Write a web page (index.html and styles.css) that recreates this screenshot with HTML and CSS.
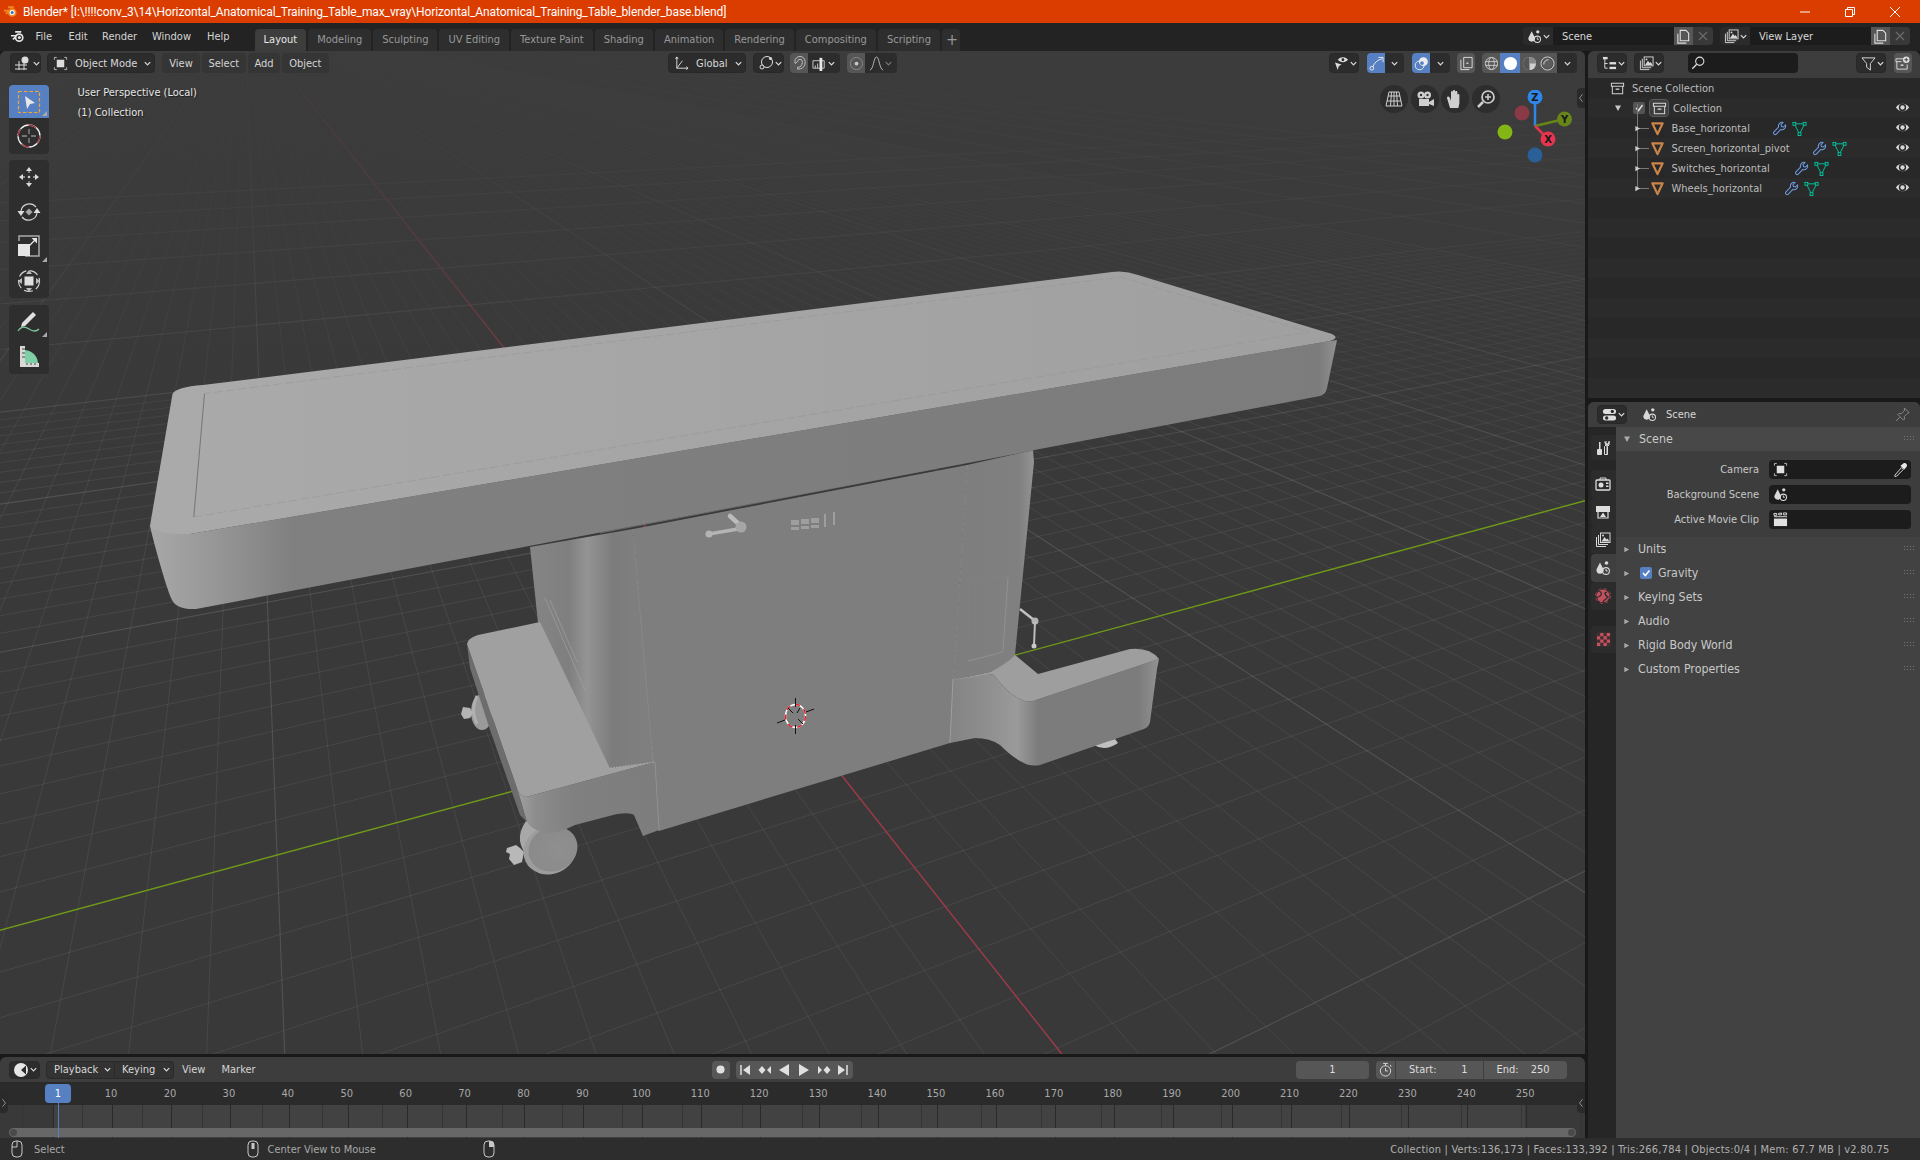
FILE: index.html
```html
<!DOCTYPE html>
<html lang="en">
<head>
<meta charset="utf-8">
<title>Blender</title>
<link rel="stylesheet" href="styles.css">
</head>
<body>
<svg class="defs" width="0" height="0" aria-hidden="true">
  <symbol id="chev" viewBox="0 0 10 10"><polyline points="2,3.5 5,6.5 8,3.5" fill="none" stroke="currentColor" stroke-width="1.4"/></symbol>
  <symbol id="scene" viewBox="0 0 16 16"><path d="M5 2.5 8.2 8.8A3.5 3.5 0 1 1 1.8 8.8Z" fill="currentColor"/><circle cx="11.5" cy="3" r="1.8" fill="currentColor"/><circle cx="11" cy="11" r="3.4" fill="none" stroke="currentColor" stroke-width="1.1"/><path d="M11 9v2h1.6" fill="none" stroke="currentColor"/></symbol>
  <symbol id="layers" viewBox="0 0 16 16"><path d="M1.5 5v9.5H11M3.5 3v9.5H13" fill="none" stroke="currentColor"/><rect x="5.5" y="1" width="9.5" height="9.5" fill="none" stroke="currentColor"/><path d="M6.5 9.5 9.5 5l2 2.5 1-1 2 3Z" fill="currentColor"/><circle cx="8" cy="3.6" r="1" fill="currentColor"/></symbol>
  <symbol id="coll" viewBox="0 0 16 16"><path d="M1.5 2.5h13v3h-13zM2.5 5.5v8h11v-8" fill="none" stroke="currentColor" stroke-width="1.1"/><rect x="6" y="8" width="4" height="1.4" fill="currentColor"/></symbol>
  <symbol id="eye" viewBox="0 0 16 16"><path d="M1 8C4 2.8 12 2.8 15 8 12 13.2 4 13.2 1 8Z" fill="currentColor"/><circle cx="8" cy="8" r="3.9" fill="#2a2a2a"/><circle cx="8" cy="8" r="2.3" fill="currentColor"/></symbol>
  <symbol id="wrench" viewBox="0 0 16 16"><path d="M14.4 4.2A3.9 3.9 0 0 1 9.4 9L4.6 14a1.7 1.7 0 0 1-2.5-2.4L7 6.6A3.9 3.9 0 0 1 11.7 1.6L9.6 3.8l.5 2.1 2.1.5Z" fill="none" stroke="#6d9be2" stroke-width="1.1"/></symbol>
  <symbol id="mesh" viewBox="0 0 16 16"><path d="M2.5 3h11L8 14Z" fill="none" stroke="#00c8a0" stroke-width="1"/><g fill="#262626" stroke="#00c8a0"><rect x="1" y="1.5" width="3" height="3"/><rect x="12" y="1.5" width="3" height="3"/><rect x="6.5" y="12.5" width="3" height="3"/></g></symbol>
  <symbol id="obj" viewBox="0 0 16 16"><path d="M2.5 2.5h11L8 14Z" fill="none" stroke="#c9844a" stroke-width="2.4" stroke-linejoin="round"/></symbol>
  <symbol id="mouse" viewBox="0 0 12 18"><rect x="1" y="1" width="10" height="16" rx="4" fill="none" stroke="#c8c8c8"/><path d="M6 1v6H1" fill="none" stroke="#c8c8c8"/></symbol>
  <symbol id="corner" viewBox="0 0 6 6"><path d="M6 0v6H0Z" fill="currentColor"/></symbol>
  <symbol id="tri-r" viewBox="0 0 8 8"><path d="M1.5 1 7 4 1.5 7Z" fill="currentColor"/></symbol>
  <symbol id="tri-d" viewBox="0 0 8 8"><path d="M1 1.5h6L4 7Z" fill="currentColor"/></symbol>
  <symbol id="grip" viewBox="0 0 12 8"><g fill="currentColor"><rect x="0" y="1" width="1" height="1"/><rect x="3" y="1" width="1" height="1"/><rect x="6" y="1" width="1" height="1"/><rect x="9" y="1" width="1" height="1"/><rect x="0" y="4" width="1" height="1"/><rect x="3" y="4" width="1" height="1"/><rect x="6" y="4" width="1" height="1"/><rect x="9" y="4" width="1" height="1"/></g></symbol>
</svg>

<header class="titlebar">
  <svg class="title-logo" viewBox="0 0 16 16" width="15" height="15"><path d="M1 7h5M3 10.5l4-3M5.5 3.5h6" stroke="#f08a24" stroke-width="2" fill="none"/><circle cx="9.8" cy="9" r="4.6" fill="#f08a24"/><circle cx="9.8" cy="9" r="2.7" fill="#fff"/><circle cx="9.8" cy="9" r="1.6" fill="#2a6fc0"/></svg>
  <span class="title-text">Blender* [I:\!!!!conv_3\14\Horizontal_Anatomical_Training_Table_max_vray\Horizontal_Anatomical_Training_Table_blender_base.blend]</span>
  <div class="winbtns">
    <svg viewBox="0 0 12 12" width="12" height="12"><path d="M1 6h10" stroke="#fff"/></svg>
    <svg viewBox="0 0 12 12" width="12" height="12"><path d="M1.5 3.5h7v7h-7zM3.5 3.5v-2h7v7h-2" fill="none" stroke="#fff"/></svg>
    <svg viewBox="0 0 12 12" width="12" height="12"><path d="M1 1l10 10M11 1 1 11" stroke="#fff"/></svg>
  </div>
</header>

<nav class="topbar">
  <svg class="blogo" viewBox="0 0 16 16" width="15" height="15"><path d="M1 7.2h5.5M3 11l4.500-3.500M5.500 3h6.500" stroke="#e6e6e6" stroke-width="1.800" fill="none"/><circle cx="9.800" cy="9.200" r="4.700" fill="#e6e6e6"/><circle cx="9.800" cy="9.200" r="2.900" fill="#232323"/><circle cx="10" cy="9" r="1.600" fill="#e6e6e6"/></svg>
  <ul class="menu">
    <li>File</li><li>Edit</li><li>Render</li><li>Window</li><li>Help</li>
  </ul>
  <ul class="tabs">
    <li class="tab active">Layout</li>
    <li class="tab">Modeling</li>
    <li class="tab">Sculpting</li>
    <li class="tab">UV Editing</li>
    <li class="tab">Texture Paint</li>
    <li class="tab">Shading</li>
    <li class="tab">Animation</li>
    <li class="tab">Rendering</li>
    <li class="tab">Compositing</li>
    <li class="tab">Scripting</li>
    <li class="tab plus">+</li>
  </ul>
  <div class="ids">
    <div class="idblock">
      <span class="idicon"><svg width="15" height="15"><use href="#scene"/></svg><svg width="9" height="9"><use href="#chev"/></svg></span>
      <span class="idfield idfield-scene">Scene</span>
      <span class="idbtn"><svg viewBox="0 0 16 16" width="15" height="15"><path d="M2 5v10h9M4.500 1.500h6l3 3v8h-9z" fill="none" stroke="#ddd" stroke-width="1.200"/></svg></span>
      <span class="idx"><svg viewBox="0 0 10 10" width="10" height="10"><path d="M1 1l8 8M9 1 1 9" stroke="#6a6a6a" stroke-width="1.200"/></svg></span>
    </div>
    <div class="idblock">
      <span class="idicon"><svg width="15" height="15"><use href="#layers"/></svg><svg width="9" height="9"><use href="#chev"/></svg></span>
      <span class="idfield idfield-layer">View Layer</span>
      <span class="idbtn"><svg viewBox="0 0 16 16" width="15" height="15"><path d="M2 5v10h9M4.500 1.500h6l3 3v8h-9z" fill="none" stroke="#ddd" stroke-width="1.200"/></svg></span>
      <span class="idx"><svg viewBox="0 0 10 10" width="10" height="10"><path d="M1 1l8 8M9 1 1 9" stroke="#6a6a6a" stroke-width="1.200"/></svg></span>
    </div>
  </div>
</nav>

<main class="workspace">
  <div class="col-left">
    <section class="viewport">
      <svg class="scene3d" viewBox="0 51 1585 1003" width="1585" height="1003">
        <defs>
          <linearGradient id="gFade" x1="0" y1="51" x2="0" y2="500" gradientUnits="userSpaceOnUse"><stop offset="0" stop-color="#3c3c3c" stop-opacity=".97"/><stop offset=".45" stop-color="#3b3b3b" stop-opacity=".72"/><stop offset="1" stop-color="#393939" stop-opacity="0"/></linearGradient>
          <linearGradient id="gTop" x1="150" y1="0" x2="1337" y2="0" gradientUnits="userSpaceOnUse"><stop offset="0" stop-color="#aaaaaa"/><stop offset="1" stop-color="#a0a0a0"/></linearGradient>
          <linearGradient id="gSide" x1="150" y1="0" x2="1337" y2="0" gradientUnits="userSpaceOnUse"><stop offset="0" stop-color="#a8a8a8"/><stop offset=".05" stop-color="#989898"/><stop offset=".12" stop-color="#808080"/><stop offset=".985" stop-color="#7c7c7c"/><stop offset="1" stop-color="#919191"/></linearGradient>
          <linearGradient id="gColL" x1="530" y1="0" x2="640" y2="0" gradientUnits="userSpaceOnUse"><stop offset="0" stop-color="#858585"/><stop offset=".35" stop-color="#7f7f7f"/><stop offset=".52" stop-color="#949494"/><stop offset=".75" stop-color="#7c7c7c"/><stop offset="1" stop-color="#7f7f7f"/></linearGradient>
          <linearGradient id="gColR" x1="960" y1="0" x2="1034" y2="0" gradientUnits="userSpaceOnUse"><stop offset="0" stop-color="#7e7e7e"/><stop offset=".8" stop-color="#808080"/><stop offset="1" stop-color="#939393"/></linearGradient>
          <linearGradient id="gWing" x1="950" y1="0" x2="1160" y2="0" gradientUnits="userSpaceOnUse"><stop offset="0" stop-color="#838383"/><stop offset=".18" stop-color="#8f8f8f"/><stop offset=".32" stop-color="#9a9a9a"/><stop offset=".42" stop-color="#7c7c7c"/><stop offset=".9" stop-color="#7c7c7c"/><stop offset="1" stop-color="#949494"/></linearGradient>
          <linearGradient id="gFoot" x1="515" y1="0" x2="660" y2="0" gradientUnits="userSpaceOnUse"><stop offset="0" stop-color="#a2a2a2"/><stop offset=".15" stop-color="#8c8c8c"/><stop offset=".4" stop-color="#808080"/><stop offset="1" stop-color="#7d7d7d"/></linearGradient>
          <radialGradient id="gWheel" cx=".6" cy=".6" r=".7"><stop offset="0" stop-color="#8f8f8f"/><stop offset=".92" stop-color="#8a8a8a"/><stop offset="1" stop-color="#a4a4a4"/></radialGradient>
        </defs>
        <g id="grid"></g>
        <rect x="0" y="51" width="1585" height="450" fill="url(#gFade)"/>

        <!-- back wheels -->
        <g class="w-back">
          <ellipse cx="482" cy="712" rx="11" ry="18" fill="#9a9a9a"/>
          <path d="M477 696q-7 14 0 28" fill="none" stroke="#b0b0b0" stroke-width="3"/>
          <path d="M463 707l7 1 3 5-3 5-6 1-3-5Z" fill="#b4b4b4"/>
        </g>
        <path d="M1094 745q11 7 24-2l-3-4q-10 4-21 1Z" fill="#c0c0c0"/>

        <!-- column and panels -->
        <path d="M530 547 633 529 655 762 610 768 538 623Z" fill="url(#gColL)"/>
        <path d="M633 529 967 465 950 743 659 831Z" fill="#7e7e7e"/>
        <path d="M967 465 1033 450 1034 462 1015 655Q1008 664 990 672L953 680 950 743Z" fill="url(#gColR)"/>
        <path d="M633 529 659 831M967 465 950 743" stroke="#8e8e8e" stroke-width=".7" stroke-dasharray="6 1" fill="none"/>
        <path d="M1008 577 1003 652 968 661" stroke="#949494" stroke-width=".8" fill="none"/>
        <path d="M969 578 1008 577M969 578 968 661" stroke="#868686" stroke-width=".6" stroke-dasharray="2 2" fill="none"/>
        <path d="M545 598 585 690M550 600 577 662" stroke="#a0a0a0" stroke-width=".7" fill="none"/>
        <path d="M600 533 1033 450" stroke="#646464" stroke-width="1.200"/>

        <!-- front wheel -->
        <g class="w-front">
          <path d="M526 821q-14 20 4 38l16 8 20-40Z" fill="#a8a8a8"/>
          <ellipse cx="550" cy="850" rx="27" ry="24" fill="#9d9d9d" transform="rotate(-25 550 850)"/>
          <ellipse cx="553" cy="849" rx="25" ry="22" fill="url(#gWheel)" transform="rotate(-25 553 849)"/>
          <path d="M507 848l9-3 4 3 4 4-2 10-8 3-5-6 1-5-4-2Z" fill="#b8b8b8"/>
        </g>

        <!-- left foot -->
        <path d="M467 644 517 788 527 822 520 815 490 730 470 668Z" fill="#6d6d6d"/>
        <path d="M517 788Q519 796 526 797L655 762 659 830 643 836 634 815Q630 812 617 814L575 825Q555 835 545 833 532 830 527 822Z" fill="url(#gFoot)"/>
        <path d="M467 644Q468 638 478 635L540 622 610 768 655 762 526 797Q519 796 517 788Z" fill="#a0a0a0"/>
        <path d="M610 768 655 762" stroke="#b0b0b0" stroke-width=".8" stroke-dasharray="2 1"/>
        <path d="M655 762 659 830" stroke="#959595" stroke-width=".8"/>

        <!-- right wing -->
        <path d="M950 743 953 679 993 674Q1005 690 1013 695 1025 703 1033 701L1159 659 1157 669 1150 722Q1149 727 1144 729L1040 765Q1030 767 1022 762 1012 757 1000 745 990 738 975 738Z" fill="url(#gWing)"/>
        <path d="M953 680 990 672Q1005 665 1015 655L1038 674 1130 649Q1150 647 1159 659L1033 701Q1025 703 1013 695 1005 690 993 674L953 680Z" fill="#9e9e9e"/>
        <path d="M953 679 950 743" stroke="#a5a5a5" stroke-width=".8"/>

        <!-- levers and switches -->
        <path d="M709 534 738 529" stroke="#b4b4b4" stroke-width="3.500"/>
        <path d="M730 516 741 526" stroke="#bcbcbc" stroke-width="4.500" stroke-linecap="round"/>
        <circle cx="741" cy="527" r="5.500" fill="#a6a6a6"/><circle cx="709" cy="534" r="3.500" fill="#b4b4b4"/>
        <g fill="#9e9e9e" class="switches">
          <rect x="791" y="520" width="8" height="5"/><rect x="801" y="519" width="8" height="5"/><rect x="811" y="518" width="8" height="5"/>
          <rect x="791" y="527" width="8" height="3"/><rect x="801" y="526" width="8" height="3"/><rect x="811" y="525" width="8" height="3"/>
          <rect x="824" y="514" width="2" height="13"/><rect x="833" y="512" width="2" height="13"/>
        </g>
        <path d="M1020 609 1034 620" stroke="#c0c0c0" stroke-width="2.500"/>
        <circle cx="1035" cy="621" r="3.500" fill="#b4b4b4"/>
        <path d="M1035 622 1034 645" stroke="#bcbcbc" stroke-width="2"/>
        <circle cx="1034" cy="646" r="2.500" fill="#c8c8c8"/>

        <!-- table -->
        <path d="M150 526C152 535 165 585 172 600Q177 610 196 609L1320 396Q1326 394 1327 388L1337 340 1330 341 190 534Z" fill="url(#gSide)"/>
        <path d="M172.500 394Q176 387 203 385L1112 272Q1125 270 1138 275L1332 334Q1340 338 1330 341L190 534Q158 535 150 526Z" fill="url(#gTop)"/>
        <path d="M204.500 393.600 193.800 517" stroke="#6f6f6f" stroke-width=".9" fill="none"/>
        <path d="M193.800 517 1309 332 1120 277 204.500 393.600" stroke="#969696" stroke-width=".6" stroke-dasharray="9 3" fill="none"/>

        <!-- 3d cursor -->
        <ellipse cx="795.500" cy="716" rx="10" ry="11.500" fill="none" stroke="#fff" stroke-width="1.500"/>
        <ellipse cx="795.500" cy="716" rx="10" ry="11.500" fill="none" stroke="#e0202c" stroke-width="1.500" stroke-dasharray="5 5"/>
        <path d="M795.500 698v9M795.500 725v9M777 723l8-3M806 712l8-3M788 708l5 5M798 719l5 5M800 708l-3 5" stroke="#101010" stroke-width="1"/>
      </svg>

      <div class="vp-head">
        <span class="hbtn h-edit"><svg viewBox="0 0 18 16" width="18" height="16"><path d="M1 10h12M5 6v9M10 6v9M1 14h12" stroke="#dcdcdc" fill="none"/><circle cx="11" cy="5" r="3.500" fill="#dcdcdc"/></svg><svg width="9" height="9"><use href="#chev"/></svg></span>
        <span class="hbtn h-mode"><svg viewBox="0 0 16 16" width="15" height="15"><rect x="4" y="4" width="8" height="8" fill="#dcdcdc"/><path d="M1.500 4V1.500H4M12 1.500h2.500V4M14.500 12v2.500H12M4 14.500H1.500V12" fill="none" stroke="#bbb"/></svg><span class="lbl">Object Mode</span><svg class="chv" width="9" height="9"><use href="#chev"/></svg></span>
        <span class="hmenu m-view">View</span>
        <span class="hmenu m-select">Select</span>
        <span class="hmenu m-add">Add</span>
        <span class="hmenu m-object">Object</span>
        <span class="hbtn h-orient"><svg viewBox="0 0 16 16" width="15" height="15"><path d="M3 1v12h12M3 13 9 5" fill="none" stroke="#ddd"/><path d="M1.500 3 3 1l1.500 2M13 11.500l2 1.500-2 1.500" fill="none" stroke="#ddd"/></svg><span class="lbl">Global</span><svg class="chv" width="9" height="9"><use href="#chev"/></svg></span>
        <span class="hbtn h-pivot"><svg viewBox="0 0 16 16" width="16" height="16"><circle cx="9" cy="7" r="5.500" fill="none" stroke="#ddd"/><circle cx="4" cy="12" r="2" fill="#2b2b2b" stroke="#ddd"/><circle cx="12.500" cy="3.500" r="1.500" fill="#ddd"/></svg><svg width="9" height="9"><use href="#chev"/></svg></span>
        <span class="hjoin h-snap">
          <i class="seg on seg-snap"><svg viewBox="0 0 16 16" width="15" height="15"><path d="M3 6A5.500 5.500 0 0 1 14 6v1C14 12 10 14 6 14V12C9 12 11 10 11 7V6A2.500 2.500 0 0 0 6 6L3.500 8Z" fill="none" stroke="#c8c8c8"/></svg></i>
          <i class="seg seg-snapt"><svg viewBox="0 0 16 16" width="15" height="15"><path d="M1 5h12v8H1z" fill="none" stroke="#ccc"/><path d="M3.500 10v3M6 8v5M3.500 11" stroke="#ccc"/><rect x="8" y="2" width="3" height="14" fill="#e8e8e8"/></svg><svg width="9" height="9"><use href="#chev"/></svg></i>
        </span>
        <span class="hjoin h-prop">
          <i class="seg on seg-prop"><svg viewBox="0 0 16 16" width="15" height="15"><circle cx="8" cy="8" r="6.500" fill="none" stroke="#8a8a8a"/><circle cx="8" cy="8" r="2" fill="#c8c8c8"/></svg></i>
          <i class="seg seg-propt"><svg viewBox="0 0 16 16" width="15" height="15"><path d="M1 15C5 14 5 1 8 1s3 13 7 14" fill="none" stroke="#bbb"/></svg><svg class="dim" width="9" height="9"><use href="#chev"/></svg></i>
        </span>
        <span class="hbtn h-vis"><svg viewBox="0 0 16 16" width="15" height="15"><path d="M4 4C7 .5 12 .5 15 4 12 7.500 7 7.500 4 4Z" fill="#ddd"/><circle cx="9.500" cy="4" r="1.500" fill="#2b2b2b"/><path d="M1 7l7 2-3 2-1 4Z" fill="#ddd"/></svg><svg width="9" height="9"><use href="#chev"/></svg></span>
        <span class="hjoin h-giz">
          <i class="seg blue seg-18"><svg viewBox="0 0 16 16" width="15" height="15"><circle cx="3" cy="13" r="2" fill="none" stroke="#eee"/><path d="M4 11.500C6 7 9 4 14 3" fill="none" stroke="#eee"/><path d="M10 1.500h5v5" fill="none" stroke="#eee"/></svg></i>
          <i class="seg seg-19"><svg width="9" height="9"><use href="#chev"/></svg></i>
        </span>
        <span class="hjoin h-ovl">
          <i class="seg blue seg-18"><svg viewBox="0 0 16 16" width="15" height="15"><circle cx="6" cy="10" r="4.700" fill="none" stroke="#eee"/><circle cx="10" cy="6" r="4.700" fill="#eee"/><circle cx="8.500" cy="7.500" r="2" fill="#5680c2"/></svg></i>
          <i class="seg seg-20"><svg width="9" height="9"><use href="#chev"/></svg></i>
        </span>
        <span class="hjoin h-xray"><i class="seg on seg-18"><svg viewBox="0 0 16 16" width="15" height="15"><path d="M5 1.500h9v11H5zM2 4v10.500h9" fill="none" stroke="#ddd"/><rect x="8" y="7" width="2" height="1.500" fill="#ddd"/></svg></i></span>
        <span class="hjoin h-shade">
          <i class="seg on seg-18"><svg viewBox="0 0 16 16" width="15" height="15"><circle cx="8" cy="8" r="6.500" fill="none" stroke="#ccc"/><ellipse cx="8" cy="8" rx="3" ry="6.500" fill="none" stroke="#ccc"/><path d="M1.500 6h13M1.500 10h13" stroke="#ccc"/></svg></i>
          <i class="seg blue seg-20"><svg viewBox="0 0 16 16" width="15" height="15"><circle cx="8" cy="8" r="7" fill="#fff"/></svg></i>
          <i class="seg on seg-18"><svg viewBox="0 0 16 16" width="15" height="15"><circle cx="8" cy="8" r="7" fill="#d0d0d0"/><path d="M8 1a7 7 0 0 0 0 14Z" fill="#555"/><path d="M8 1a7 7 0 0 1 7 7H8Z" fill="#888"/></svg></i>
          <i class="seg on seg-19"><svg viewBox="0 0 16 16" width="15" height="15"><circle cx="8" cy="8" r="7" fill="none" stroke="#d0d0d0"/><circle cx="8" cy="8" r="5" fill="#5d5d5d"/><path d="M4 9a5 5 0 0 1 5-5" stroke="#ddd" fill="none"/></svg></i>
          <i class="seg seg-20"><svg width="9" height="9"><use href="#chev"/></svg></i>
        </span>
      </div>

      <div class="vp-body">
        <div class="toolbar">
          <div class="toolgroup">
            <div class="tool active">
              <svg viewBox="0 0 24 24" width="24" height="24"><rect x="1.500" y="1.500" width="21" height="21" fill="none" stroke="#f2a43a" stroke-width="1.200" stroke-dasharray="3.500 2"/><path d="M8 6 18 13 13 14 10 19Z" fill="#e8e8e8"/></svg>
              <svg class="cnr" width="5" height="5"><use href="#corner"/></svg>
            </div>
            <div class="tool tool-cursor">
              <svg viewBox="0 0 24 24" width="24" height="24"><circle cx="12" cy="12" r="11" fill="none" stroke="#eee" stroke-width="1.300"/><circle cx="12" cy="12" r="11" fill="none" stroke="#9a2f38" stroke-width="1.300" stroke-dasharray="8 9"/><path d="M12 5v5M12 14v5M5 12h5M14 12h5" stroke="#8c8c8c" stroke-width="1.300"/></svg>
            </div>
          </div>
          <div class="toolgroup">
            <div class="tool">
              <svg viewBox="0 0 24 24" width="24" height="24"><path d="M12 2l3 4H9ZM12 22l3-4H9ZM2 12l4-3v6ZM22 12l-4-3v6Z" fill="#dcdcdc"/><path d="M12 6v2M12 16v2M6 12h2M16 12h2" stroke="#aaa" stroke-width="1.300"/><circle cx="12" cy="12" r="1.300" fill="#ccc"/></svg>
            </div>
            <div class="tool">
              <svg viewBox="0 0 24 24" width="24" height="24"><path d="M4 11A8.500 8.500 0 0 1 19 7M20 13A8.500 8.500 0 0 1 5 17" fill="none" stroke="#cfcfcf" stroke-width="1.200"/><path d="M0.500 11h7l-3.500 5ZM23.500 13h-7l3.500-5Z" fill="#dcdcdc"/><path d="M12 8.500 15.500 12 12 15.500 8.500 12Z" fill="#a8a8a8"/></svg>
            </div>
            <div class="tool">
              <svg class="cnr-host" viewBox="0 0 24 24" width="24" height="24"><path d="M7 2h15v15M2 7V2h5" fill="none" stroke="#aaa" stroke-width="1.500"/><path d="M7 2H2v5" fill="none"/><path d="M22 17v5H8" fill="none" stroke="#aaa" stroke-width="1.500"/><rect x="1" y="10" width="12" height="12" fill="#e6e6e6"/><path d="M12 12 19 5" stroke="#e6e6e6" stroke-width="1.300"/><path d="M14.500 4H20v5.500Z" fill="#e6e6e6"/></svg>
              <svg class="cnr" width="5" height="5"><use href="#corner"/></svg>
            </div>
            <div class="tool">
              <svg viewBox="0 0 24 24" width="24" height="24"><circle cx="12" cy="12" r="10.500" fill="none" stroke="#cfcfcf" stroke-width="1.200" stroke-dasharray="9 3.500"/><rect x="7.500" y="7.500" width="9" height="9" fill="#dedede"/><path d="M12 1l3 4H9ZM12 23l3-4H9ZM1 12l4-3v6ZM23 12l-4-3v6Z" fill="#bbb"/></svg>
            </div>
          </div>
          <div class="toolgroup">
            <div class="tool">
              <svg viewBox="0 0 24 24" width="24" height="24"><path d="M5 13 16 2l3 3L8 16l-4 1Z" fill="#e0e0e0"/><path d="M1 21C5 15 9 17 12 19s7 3 10 0" fill="none" stroke="#7cc79b" stroke-width="1.300"/></svg>
              <svg class="cnr" width="5" height="5"><use href="#corner"/></svg>
            </div>
            <div class="tool">
              <svg viewBox="0 0 24 24" width="24" height="24"><path d="M8 6A14 14 0 0 1 21 19H8Z" fill="#7ecfa4"/><path d="M3 2h5v17H22v4H3Z" fill="#d8d8d8"/><path d="M5 5h3M5 9h3M5 13h3M10 21v-2M14 21v-2M18 21v-2" stroke="#444"/></svg>
            </div>
          </div>
        </div>
        <div class="vp-info">
          <p>User Perspective (Local)</p>
          <p>(1) Collection</p>
        </div>
      </div>

      <div class="navbtns">
        <span class="navbtn"><svg viewBox="0 0 20 20" width="20" height="20"><path d="M5 3h10l3 14H2ZM10 3v14M4 7h12M3 12h14M7.500 3l-1 14M12.500 3l1 14" fill="none" stroke="#cfcfcf"/></svg></span>
        <span class="navbtn"><svg viewBox="0 0 20 20" width="20" height="20"><circle cx="6" cy="6" r="3.500" fill="#cfcfcf"/><circle cx="12.500" cy="6" r="3.500" fill="#cfcfcf"/><circle cx="6" cy="6" r="1.200" fill="#333"/><circle cx="12.500" cy="6" r="1.200" fill="#333"/><rect x="4" y="10" width="10" height="7" fill="#cfcfcf"/><path d="M14 13l5-3v7l-5-2Z" fill="#cfcfcf"/></svg></span>
        <span class="navbtn"><svg viewBox="0 0 20 20" width="20" height="20"><path d="M5 19 2 9c0-2 2-2 3 0l1 3V3c0-1.500 2-1.500 2 0v6V2c0-1.500 2.200-1.500 2.200 0v7V3c0-1.500 2.200-1.500 2.200 0v7V6c0-1.500 2-1.500 2 0v8l-1 5Z" fill="#cfcfcf"/></svg></span>
        <span class="navbtn"><svg viewBox="0 0 20 20" width="20" height="20"><circle cx="12" cy="8" r="6" fill="none" stroke="#cfcfcf" stroke-width="1.700"/><path d="M7 13 2 18" stroke="#cfcfcf" stroke-width="2.500"/><path d="M9 8h6M12 5v6" stroke="#cfcfcf" stroke-width="1.500"/></svg></span>
      </div>

      <svg class="gizmo" viewBox="0 0 90 100" width="90" height="100">
        <circle cx="29" cy="23" r="7.500" fill="#8a3a47"/>
        <circle cx="12" cy="42" r="7.500" fill="#83b514"/>
        <circle cx="42" cy="65" r="7.500" fill="#2b5f97"/>
        <path d="M42 36V7" stroke="#2e86e8" stroke-width="2.500"/>
        <path d="M42 36 71.500 29" stroke="#678519" stroke-width="2.500"/>
        <path d="M42 36 55 49" stroke="#e8344f" stroke-width="2.500"/>
        <circle cx="42" cy="7" r="7.500" fill="#2e86e8"/>
        <circle cx="71.500" cy="29" r="7.500" fill="#678519"/>
        <circle cx="55" cy="49" r="7.500" fill="#e8344f"/>
        <text x="42" y="10.500" class="gz">Z</text>
        <text x="71.500" y="32.500" class="gz">Y</text>
        <text x="55" y="52.500" class="gz">X</text>
      </svg>
      <span class="chevtab chevtab-vp"><svg viewBox="0 0 8 12" width="6" height="10"><path d="M6 1 2 6l4 5" fill="none" stroke="#999" stroke-width="1.200"/></svg></span>
    </section>

    <section class="timeline">
      <div class="tl-head">
        <span class="tlbtn t-edit"><svg viewBox="0 0 16 16" width="16" height="16"><circle cx="8" cy="8" r="7" fill="#e6e6e6"/><path d="M8 8 13 3.500 13 12.500Z" fill="#2c2c2c"/></svg><svg width="9" height="9"><use href="#chev"/></svg></span>
        <span class="tljoin">
          <span class="tlbtn t-play"><span class="lbl">Playback</span><svg class="chv" width="9" height="9"><use href="#chev"/></svg></span>
          <span class="tlbtn t-key"><span class="lbl">Keying</span><svg class="chv" width="9" height="9"><use href="#chev"/></svg></span>
        </span>
        <span class="tlmenu t-view">View</span>
        <span class="tlmenu t-marker">Marker</span>
        <span class="tbtn t-rec"><svg viewBox="0 0 10 10" width="9" height="9"><circle cx="5" cy="5" r="4.500" fill="#e0e0e0"/></svg></span>
        <span class="transport">
          <span class="tbtn"><svg viewBox="0 0 14 14" width="14" height="14"><path d="M3 2v10" stroke="#e0e0e0" stroke-width="1.500"/><path d="M12 2v10L5 7Z" fill="#e0e0e0"/></svg></span>
          <span class="tbtn"><svg viewBox="0 0 14 14" width="14" height="14"><path d="M4 3 7.500 7 4 11 .5 7Z" fill="#e0e0e0"/><path d="M13 3v8L9 7Z" fill="#e0e0e0"/></svg></span>
          <span class="tbtn"><svg viewBox="0 0 14 14" width="14" height="14"><path d="M12 1v12L2 7Z" fill="#e0e0e0"/></svg></span>
          <span class="tbtn"><svg viewBox="0 0 14 14" width="14" height="14"><path d="M2 1v12L12 7Z" fill="#e0e0e0"/></svg></span>
          <span class="tbtn"><svg viewBox="0 0 14 14" width="14" height="14"><path d="M1 3v8L5 7Z" fill="#e0e0e0"/><path d="M10 3 13.500 7 10 11 6.500 7Z" fill="#e0e0e0"/></svg></span>
          <span class="tbtn"><svg viewBox="0 0 14 14" width="14" height="14"><path d="M11 2v10" stroke="#e0e0e0" stroke-width="1.500"/><path d="M2 2v10L9 7Z" fill="#e0e0e0"/></svg></span>
        </span>
        <span class="numfield t-cur">1</span>
        <span class="frames">
          <span class="fbtn t-clock"><svg viewBox="0 0 16 16" width="15" height="15"><circle cx="8" cy="9.500" r="5.500" fill="none" stroke="#ddd"/><path d="M5.500 1.500h5M8 2v2M8 6.500v3h2.500M13 3l1 2" fill="none" stroke="#ddd"/></svg></span>
          <span class="fbtn t-start"><span>Start:</span><span>1</span></span>
          <span class="fbtn t-end"><span>End:</span><span>250</span></span>
        </span>
      </div>
      <div class="ruler">
        <span>10</span><span>20</span><span>30</span><span>40</span><span>50</span><span>60</span><span>70</span><span>80</span><span>90</span><span>100</span><span>110</span><span>120</span><span>130</span><span>140</span><span>150</span><span>160</span><span>170</span><span>180</span><span>190</span><span>200</span><span>210</span><span>220</span><span>230</span><span>240</span><span>250</span>
      </div>
      <div class="tl-body"><div class="scrollbar"><i class="knob"></i><i class="knob"></i></div></div>
      <span class="playhead">1</span>
      <span class="chevtab chevtab-tl"><svg viewBox="0 0 8 12" width="6" height="10"><path d="M6 1 2 6l4 5" fill="none" stroke="#999" stroke-width="1.200"/></svg></span>
      <span class="chevtab chevtab-tll"><svg viewBox="0 0 8 12" width="6" height="10"><path d="M2 1l4 5-4 5" fill="none" stroke="#999" stroke-width="1.200"/></svg></span>
    </section>
  </div>

  <div class="col-right">
    <section class="outliner">
      <div class="ol-head">
        <span class="hbtn o-type"><svg viewBox="0 0 16 16" width="15" height="15"><path d="M3 3v10M3 8h3M3 13h3" stroke="#ddd" fill="none"/><rect x="1" y="1" width="5" height="2.500" fill="#ddd"/><rect x="8" y="6.500" width="7" height="2.500" fill="#ddd"/><rect x="8" y="11.500" width="7" height="2.500" fill="#ddd"/></svg><svg width="9" height="9"><use href="#chev"/></svg></span>
        <span class="hbtn o-mode"><svg width="15" height="15"><use href="#layers"/></svg><svg width="9" height="9"><use href="#chev"/></svg></span>
        <span class="o-search"><svg viewBox="0 0 16 16" width="14" height="14"><circle cx="10" cy="6" r="4.700" fill="none" stroke="#ddd" stroke-width="1.200"/><path d="M6.500 9.500 1.500 14.500" stroke="#ddd" stroke-width="1.500"/></svg></span>
        <span class="hbtn o-filter"><svg viewBox="0 0 16 16" width="15" height="15"><path d="M1 2h14L10 8v7L6 12V8Z" fill="none" stroke="#ddd"/></svg><svg width="9" height="9"><use href="#chev"/></svg></span>
        <span class="o-new"><svg viewBox="0 0 16 16" width="15" height="15"><path d="M1 3h8M2 6v8h11V9M1 3v3h6" fill="none" stroke="#ddd"/><rect x="6" y="9" width="3" height="1.500" fill="#ddd"/><circle cx="12" cy="4" r="3.500" fill="#ddd"/><path d="M12 2v4M10 4h4" stroke="#444"/></svg></span>
      </div>
      <ul class="ol-list">
        <li class="row r-scene"><svg class="ic" width="15" height="15"><use href="#coll"/></svg><span>Scene Collection</span></li>
        <li class="row r-coll">
          <svg class="tw" width="8" height="8"><use href="#tri-d"/></svg>
          <span class="chk"><svg viewBox="0 0 10 10" width="10" height="10"><path d="M2 5 4.500 7.500 8.500 2" fill="none" stroke="#ddd" stroke-width="1.500"/></svg></span>
          <span class="collic"><svg width="15" height="15"><use href="#coll"/></svg></span>
          <span>Collection</span>
          <svg class="eye" width="15" height="15"><use href="#eye"/></svg>
        </li>
        <li class="row r-obj"><svg class="tr" width="7" height="7"><use href="#tri-r"/></svg><svg class="ob" width="15" height="15"><use href="#obj"/></svg><span class="w-base">Base_horizontal</span><svg class="mod" width="15" height="15"><use href="#wrench"/></svg><svg class="mod" width="15" height="15"><use href="#mesh"/></svg><svg class="eye" width="15" height="15"><use href="#eye"/></svg></li>
        <li class="row r-obj"><svg class="tr" width="7" height="7"><use href="#tri-r"/></svg><svg class="ob" width="15" height="15"><use href="#obj"/></svg><span class="w-screen">Screen_horizontal_pivot</span><svg class="mod" width="15" height="15"><use href="#wrench"/></svg><svg class="mod" width="15" height="15"><use href="#mesh"/></svg><svg class="eye" width="15" height="15"><use href="#eye"/></svg></li>
        <li class="row r-obj"><svg class="tr" width="7" height="7"><use href="#tri-r"/></svg><svg class="ob" width="15" height="15"><use href="#obj"/></svg><span class="w-switch">Switches_horizontal</span><svg class="mod" width="15" height="15"><use href="#wrench"/></svg><svg class="mod" width="15" height="15"><use href="#mesh"/></svg><svg class="eye" width="15" height="15"><use href="#eye"/></svg></li>
        <li class="row r-obj"><svg class="tr" width="7" height="7"><use href="#tri-r"/></svg><svg class="ob" width="15" height="15"><use href="#obj"/></svg><span class="w-wheel">Wheels_horizontal</span><svg class="mod" width="15" height="15"><use href="#wrench"/></svg><svg class="mod" width="15" height="15"><use href="#mesh"/></svg><svg class="eye" width="15" height="15"><use href="#eye"/></svg></li>
        <li class="row"></li><li class="row"></li><li class="row"></li><li class="row"></li><li class="row"></li><li class="row"></li><li class="row"></li><li class="row"></li><li class="row"></li><li class="row"></li>
      </ul>
    </section>

    <section class="props">
      <div class="pr-head">
        <span class="hbtn p-type"><svg viewBox="0 0 16 16" width="15" height="15"><rect x="1" y="2" width="14" height="5.500" rx="2.700" fill="#ddd"/><rect x="1" y="9" width="14" height="5.500" rx="2.700" fill="#ddd"/><circle cx="11" cy="4.700" r="1.800" fill="#2b2b2b"/><circle cx="5" cy="11.700" r="1.800" fill="#2b2b2b"/></svg><svg width="9" height="9"><use href="#chev"/></svg></span>
        <svg class="p-sc" width="15" height="15"><use href="#scene"/></svg>
        <span class="p-title">Scene</span>
        <svg class="p-pin" viewBox="0 0 16 16" width="15" height="15"><path d="M10 1l5 5-2 1-3 3v3l-1 1-6-6 1-1h3l3-3ZM5 11l-4 4" fill="none" stroke="#8c8c8c"/></svg>
      </div>
      <div class="pr-main">
        <div class="pr-tabs">
          <div class="ptgroup">
            <span class="ptab pt-tool"><svg viewBox="0 0 16 16" width="16" height="16"><path d="M11 1v4l-1.500 1.500v8h3v-8L14 5V1" fill="none" stroke="#ddd"/><path d="M9.500 1l2.500 3 2.500-3v2l-2 3v9h-1V6l-2-3Z" fill="#ddd"/><rect x="2" y="9" width="5" height="6" rx="1" fill="#ddd"/><rect x="4" y="2" width="1.500" height="7" fill="#ddd"/></svg></span>
          </div>
          <div class="ptgroup">
            <span class="ptab"><svg viewBox="0 0 16 16" width="16" height="16"><rect x="1" y="4" width="14" height="10" rx="1" fill="none" stroke="#ddd" stroke-width="1.300"/><path d="M5 4V2h6v2" fill="none" stroke="#ddd"/><circle cx="6" cy="9" r="2.500" fill="#ddd"/><rect x="11" y="6.500" width="2.500" height="1.500" fill="#ddd"/><rect x="11" y="9.500" width="2.500" height="1.500" fill="#ddd"/></svg></span>
            <span class="ptab"><svg viewBox="0 0 16 16" width="16" height="16"><rect x="1" y="2" width="14" height="6" fill="#ddd"/><path d="M3 8v6h10V8" fill="none" stroke="#ddd" stroke-width="1.200"/><path d="M5 13 8 8.500 11 13Z" fill="#ddd"/></svg></span>
            <span class="ptab"><svg width="16" height="16"><use href="#layers"/></svg></span>
            <span class="ptab current"><svg width="16" height="16"><use href="#scene"/></svg></span>
            <span class="ptab"><svg viewBox="0 0 16 16" width="16" height="16"><circle cx="8" cy="8" r="6.500" fill="#c2505e"/><path d="M4 3c2 1 3 2 2 4s-3 1-4 3M8 15c0-2 1-3 3-4l2-2c-2-1-3-2-3-4l2-1" fill="none" stroke="#2b2b2b" stroke-width="1.300"/><circle cx="8" cy="8" r="7.500" fill="none" stroke="#c2505e" stroke-width=".7" stroke-dasharray="3 3"/></svg></span>
          </div>
          <div class="ptgroup">
            <span class="ptab pt-tex"><svg viewBox="0 0 16 16" width="15" height="15"><rect x="1" y="1" width="14" height="14" fill="#c9505f"/><path d="M1 1h3.500v3.500H1zM8 1h3.500v3.500H8zM4.500 4.500H8V8H4.500zM11.500 4.500H15V8h-3.500zM1 8h3.500v3.500H1zM8 8h3.500v3.500H8zM4.500 11.500H8V15H4.500zM11.500 11.500H15V15h-3.500z" fill="#3e3032"/></svg></span>
          </div>
        </div>
        <div class="pr-panels">
          <div class="panel-head open"><svg class="ptri" width="8" height="8"><use href="#tri-d"/></svg><span>Scene</span><svg class="grip" width="12" height="8"><use href="#grip"/></svg></div>
          <div class="panel-body">
            <div class="prop"><label>Camera</label><span class="field"><svg viewBox="0 0 16 16" width="15" height="15"><rect x="4" y="4" width="8" height="8" fill="#e0e0e0"/><path d="M1.500 4V1.500H4M12 1.500h2.500V4M14.500 12v2.500H12M4 14.500H1.500V12" fill="none" stroke="#bbb"/></svg><svg class="drop" viewBox="0 0 16 16" width="15" height="15"><path d="M2 14 9 6l2 2-7 7-2 .5Z" fill="none" stroke="#ddd"/><path d="M8 4 11 1.500C13 0 16 3 14.500 5L12 8Z" fill="#e8e8e8"/></svg></span></div>
            <div class="prop"><label>Background Scene</label><span class="field"><svg width="15" height="15"><use href="#scene"/></svg></span></div>
            <div class="prop"><label>Active Movie Clip</label><span class="field"><svg viewBox="0 0 16 16" width="15" height="15"><path d="M1 7h14v8H1z" fill="#e0e0e0"/><path d="M1 1.500h3v2H1zM6 1.500 9 1v2H6zM11 1h3.500v2H11zM1 5h14" fill="none" stroke="#e0e0e0"/></svg></span></div>
          </div>
          <div class="panel-head"><svg class="ptri" width="7" height="7"><use href="#tri-r"/></svg><span>Units</span><svg class="grip" width="12" height="8"><use href="#grip"/></svg></div>
          <div class="panel-head"><svg class="ptri" width="7" height="7"><use href="#tri-r"/></svg><span class="gcheck"><svg viewBox="0 0 10 10" width="10" height="10"><path d="M2 5 4.300 7.500 8.500 2.500" fill="none" stroke="#fff" stroke-width="1.500"/></svg></span><span>Gravity</span><svg class="grip" width="12" height="8"><use href="#grip"/></svg></div>
          <div class="panel-head"><svg class="ptri" width="7" height="7"><use href="#tri-r"/></svg><span>Keying Sets</span><svg class="grip" width="12" height="8"><use href="#grip"/></svg></div>
          <div class="panel-head"><svg class="ptri" width="7" height="7"><use href="#tri-r"/></svg><span>Audio</span><svg class="grip" width="12" height="8"><use href="#grip"/></svg></div>
          <div class="panel-head"><svg class="ptri" width="7" height="7"><use href="#tri-r"/></svg><span>Rigid Body World</span><svg class="grip" width="12" height="8"><use href="#grip"/></svg></div>
          <div class="panel-head"><svg class="ptri" width="7" height="7"><use href="#tri-r"/></svg><span>Custom Properties</span><svg class="grip" width="12" height="8"><use href="#grip"/></svg></div>
        </div>
      </div>
    </section>
  </div>
</main>

<footer class="statusbar">
  <svg class="st-m1" width="12" height="18"><use href="#mouse"/></svg><span class="st-l1">Select</span>
  <svg class="st-m2" viewBox="0 0 12 18" width="12" height="18"><rect x="1" y="1" width="10" height="16" rx="4" fill="none" stroke="#c8c8c8"/><rect x="4.500" y="3" width="3" height="6" fill="#c8c8c8"/></svg><span class="st-l2">Center View to Mouse</span>
  <svg class="st-m3" viewBox="0 0 12 18" width="12" height="18"><rect x="1" y="1" width="10" height="16" rx="4" fill="none" stroke="#c8c8c8"/><path d="M6 1h1a4 4 0 0 1 4 4v2H6Z" fill="#c8c8c8"/></svg>
  <span class="st-stats">Collection | Verts:136,173 | Faces:133,392 | Tris:266,784 | Objects:0/4 | Mem: 67.7 MB | v2.80.75</span>
</footer>
<script src="grid.js"></script>
</body>
</html>
```
FILE: styles.css
```css
* { box-sizing: border-box; }
html, body { margin: 0; padding: 0; }
body {
  width: 1920px; height: 1160px; overflow: hidden;
  display: flex; flex-direction: column;
  background: #191919; color: #d0d0d0;
  font: 11px/1 "DejaVu Sans Condensed", "DejaVu Sans", sans-serif;
  font-stretch: condensed;
}
ul { list-style: none; margin: 0; padding: 0; }
p { margin: 0; }
i { font-style: normal; }
svg { display: block; flex: none; color: #d8d8d8; }
.defs { position: absolute; }

/* title bar */
.titlebar { height: 23px; flex: none; background: #db3d00; display: flex; align-items: center; padding-left: 3px; color: #fff; }
.title-text { margin-left: 5px; font: 12px Roboto, "Noto Sans", sans-serif; letter-spacing: -.11px; color: #fff; }
.title-logo { margin-top: -1px; }
.winbtns { margin-left: auto; display: flex; gap: 33px; padding-right: 19px; }

/* top bar */
.topbar { height: 28px; flex: none; background: #232323; display: flex; position: relative; }
.blogo { margin: 6px 0 0 10px; }
.menu { display: flex; margin: 8px 0 0 10.5px; color: #d4d4d4; height: 12px; }
.menu li:nth-child(1) { width: 33px; }
.menu li:nth-child(2) { width: 33.5px; }
.menu li:nth-child(3) { width: 50px; }
.menu li:nth-child(4) { width: 55px; }
.tabs { display: flex; gap: 2px; margin: 6px 0 0 25px; height: 22px; }
.tab { background: #2e2e2e; color: #989898; border-radius: 4px 4px 0 0; padding: 5px 9px 0; }
.tab.active { background: #3d3d3d; color: #e6e6e6; }
.tab.plus { padding: 3px 4px 0; font-size: 16px; width: 18px; }
.ids { position: absolute; right: 10px; top: 4px; display: flex; gap: 7px; }
.idblock { display: flex; height: 18px; border-radius: 4px; overflow: hidden; background: #2b2b2b; }
.idicon { width: 30px; display: flex; align-items: center; padding-left: 4px; gap: 0; }
.idfield { background: #1c1c1c; color: #d8d8d8; padding: 4px 0 0 9px; height: 18px; }
.idfield-scene { width: 121px; }
.idfield-layer { width: 121px; }
.idbtn { width: 19px; background: #565656; display: flex; align-items: center; justify-content: center; }
.idx { width: 20px; background: #383838; display: flex; align-items: center; justify-content: center; }

/* workspace */
.workspace { flex: 1; min-height: 0; display: flex; gap: 3px; }
.col-left { width: 1585px; flex: none; display: flex; flex-direction: column; gap: 3px; }
.col-right { flex: 1; min-width: 0; display: flex; flex-direction: column; gap: 4px; }

/* viewport */
.viewport { flex: 1; min-height: 0; position: relative; background: #393939; border-radius: 6px 6px 0 0; overflow: hidden; }
.scene3d { position: absolute; left: 0; top: 0; }
.vp-head { position: relative; display: flex; align-items: center; height: 20px; margin: 2px 0 0 10px; }
.hbtn { display: flex; align-items: center; height: 20px; background: #2c2c2c; border-radius: 4px; border: 1px solid #282828; padding-left: 5px; color: #d8d8d8; }
.hbtn .lbl { margin-left: 7px; }
.hbtn .chv { margin-left: auto; margin-right: 2px; }
.h-edit { width: 31px; padding-left: 3px; }
.h-mode { width: 108px; margin-left: 6px; }
.hmenu { display: flex; align-items: center; justify-content: center; height: 20px; background: #353535; border-radius: 4px; color: #d4d4d4; }
.m-view { width: 38px; margin-left: 7px; }
.m-select { width: 44.500px; margin-left: 1.500px; }
.m-add { width: 32px; margin-left: 2px; }
.m-object { width: 46.500px; margin-left: 2px; }
.h-orient { width: 78px; margin-left: 339.500px; }
.h-pivot { width: 31px; margin-left: 7px; padding-left: 4px; }
.hjoin { display: flex; height: 20px; border-radius: 4px; overflow: hidden; background: #2c2c2c; }
.seg { display: flex; align-items: center; justify-content: center; height: 20px; }
.seg.on { background: #565656; }
.seg.blue { background: #5680c2; }
.h-snap { margin-left: 6px; }
.seg-snap { width: 18px; }
.seg-snapt { width: 32px; }
.h-prop { margin-left: 7px; }
.seg-prop { width: 18px; }
.seg-propt { width: 32px; }
.dim { color: #777; }
.h-vis { width: 30px; margin-left: 432px; padding-left: 4px; }
.h-giz { margin-left: 8px; }
.h-ovl { margin-left: 8px; }
.h-xray { margin-left: 7px; }
.h-shade { margin-left: 7px; }
.seg-18 { width: 18px; }
.seg-19 { width: 19px; }
.seg-20 { width: 20px; }

.vp-body { position: relative; display: flex; margin-top: 12px; padding-left: 9px; }
.toolbar { display: flex; flex-direction: column; gap: 6.500px; width: 40px; }
.toolgroup { display: flex; flex-direction: column; background: #2e2e2e; border-radius: 4px; overflow: hidden; }
.tool { height: 34.500px; width: 40px; display: flex; align-items: center; justify-content: center; position: relative; }
.tool.active { background: #5680c2; height: 33px; }
.tool-cursor { height: 35.500px; }
.cnr { position: absolute; right: 2px; bottom: 2px; color: #aaa; width: 5px; height: 5px; }
.vp-info { margin: 1px 0 0 28.500px; color: #e6e6e6; text-shadow: 1px 1px 1px #1c1c1c; }
.vp-info p { height: 20px; line-height: 14px; }

.navbtns { position: absolute; left: 1380px; top: 34px; display: flex; gap: 2.500px; }
.navbtn { width: 28px; height: 28px; border-radius: 50%; background: #2d2d2d; display: flex; align-items: center; justify-content: center; }
.gizmo { position: absolute; left: 1493px; top: 39px; }
.gz { font: bold 10px "DejaVu Sans", sans-serif; text-anchor: middle; fill: #1a1a1a; }
.chevtab { position: absolute; width: 8px; height: 20px; background: #2a2a2a; display: flex; align-items: center; justify-content: center; }
.chevtab-vp { right: 0; top: 37px; border-radius: 4px 0 0 4px; }
.chevtab-tl { right: 0; top: 36px; border-radius: 4px 0 0 4px; }
.chevtab-tll { left: 0; top: 36px; border-radius: 0 4px 4px 0; }

/* timeline */
.timeline { height: 81px; flex: none; position: relative; background: #3d3d3d; border-radius: 6px 6px 0 0; overflow: hidden; display: flex; flex-direction: column; }
.tl-head { height: 25px; flex: none; display: flex; align-items: center; padding-left: 9px; }
.tlbtn { display: flex; align-items: center; height: 18px; background: #333; color: #d8d8d8; border: 1px solid #2a2a2a; border-radius: 4px; }
.tlbtn .chv { margin-left: auto; margin-right: 2px; }
.t-edit { width: 31px; padding-left: 3px; background: #2c2c2c; }
.tljoin { display: flex; margin-left: 6px; }
.t-play { width: 69px; border-radius: 4px 0 0 4px; padding-left: 7px; }
.t-key { width: 59px; border-radius: 0 4px 4px 0; padding-left: 7px; border-left: 0; }
.tlmenu { color: #d4d4d4; }
.t-view { margin-left: 8px; width: 39.500px; }
.t-marker { width: 40px; }
.tbtn { display: flex; align-items: center; justify-content: center; width: 19.600px; height: 18px; background: #575757; }
.t-rec { width: 18px; border-radius: 4px; margin-left: 450px; }
.transport { display: flex; gap: 0; margin-left: 6px; border-radius: 4px; overflow: hidden; }
.numfield { width: 73.500px; height: 18px; background: #565656; border-radius: 4px; color: #ddd; display: flex; align-items: center; justify-content: center; margin-left: 442.500px; }
.frames { display: flex; margin-left: 7px; border-radius: 4px; overflow: hidden; height: 18px; background: #565656; color: #ddd; }
.fbtn { display: flex; align-items: center; justify-content: space-between; height: 18px; border-left: 1px solid #3e3e3e; }
.t-clock { width: 19px; border-left: 0; justify-content: center; }
.t-start { width: 87.500px; padding: 0 15px 0 13px; }
.t-end { width: 84px; padding: 0 17px 0 13px; }
.ruler { height: 23px; flex: none; background: #2b2b2b; display: flex; padding-left: 81.600px; color: #a8a8a8; }
.ruler span { flex: 0 0 58.930px; text-align: center; line-height: 23px; }
.tl-body {
  flex: 1; display: flex; flex-direction: column; justify-content: flex-end; padding: 0 9px 1px;
  background:
    repeating-linear-gradient(90deg, transparent -4.930px 53px, #2a2a2a 53px 54px),
    repeating-linear-gradient(90deg, transparent 23.465px 82.400px, #353535 82.400px 83.395px),
    linear-gradient(90deg, #393939 0 54px, #424242 54px 1525px, #393939 1525px);
}
.scrollbar { height: 9px; border-radius: 5px; background: #676767; display: flex; justify-content: space-between; align-items: center; padding: 0 1px; }
.knob { width: 7px; height: 7px; border-radius: 50%; background: #4a4a4a; }
.playhead { position: absolute; left: 45px; top: 27px; width: 26px; height: 19px; background: #5680c2; color: #fff; border-radius: 4px; display: flex; align-items: center; justify-content: center; }
.playhead::after { content: ""; position: absolute; left: 12.500px; top: 19px; width: 1px; height: 40px; background: #5680c2; }

/* outliner */
.outliner { height: 347px; flex: none; background: #282828; border-radius: 6px 6px 0 0; overflow: hidden; display: flex; flex-direction: column; }
.ol-head { height: 27px; flex: none; background: #3d3d3d; display: flex; align-items: flex-start; padding: 2px 0 0 9px; position: relative; }
.o-type { width: 30px; padding-left: 4px; }
.o-mode { width: 30px; margin-left: 7px; padding-left: 4px; }
.o-search { width: 110px; height: 20px; background: #1c1c1c; border-radius: 4px; margin-left: 23.500px; display: flex; align-items: center; padding-left: 3px; }
.o-filter { width: 30px; margin-left: 58px; padding-left: 4px; }
.o-new { width: 18px; height: 20px; background: #565656; border-radius: 4px; margin-left: 8px; display: flex; align-items: center; justify-content: center; }
.ol-list { flex: 1; }
.row { height: 20px; display: flex; align-items: center; position: relative; color: #bdbdbd; }
.row:nth-child(even) { background: #2b2b2b; }
.r-scene { padding-left: 22px; }
.r-scene .ic { color: #d0d0d0; }
.r-scene span { margin-left: 7px; }
.tw { margin-left: 26px; color: #c8c8c8; }
.chk { width: 12px; height: 12px; background: #545454; border-radius: 2px; margin-left: 11px; display: flex; align-items: center; justify-content: center; }
.collic { width: 20px; height: 18px; background: #3d3d3d; border: 1px solid #5a5a5a; border-radius: 4px; margin: 0 4px 0 4px; display: flex; align-items: center; justify-content: center; }
.eye { position: absolute; right: 10px; top: 2px; color: #d8d8d8; }
.r-obj::before { content: ""; position: absolute; left: 49px; top: -10px; width: 1px; height: 20px; background: #777; }
.r-obj::after { content: ""; position: absolute; left: 49px; top: 10px; width: 12px; height: 1px; background: #777; }
.r-obj:nth-child(3)::before { top: -14px; height: 24px; }
.tr { margin-left: 46px; color: #c8c8c8; position: relative; z-index: 1; }
.ob { margin-left: 9px; }
.r-obj span { margin-left: 6.500px; }
.w-base { width: 100px; }
.w-screen { width: 140px; }
.w-switch { width: 122.500px; }
.w-wheel { width: 112px; }
.mod { margin-right: 5px; }

/* properties */
.props { flex: 1; min-height: 0; background: #3d3d3d; border-radius: 6px 6px 0 0; overflow: hidden; display: flex; flex-direction: column; }
.pr-head { height: 25px; flex: none; display: flex; align-items: center; padding-left: 9px; background: #3d3d3d; }
.p-type { width: 30px; height: 19px; padding-left: 4px; }
.p-sc { margin-left: 15px; }
.p-title { margin-left: 9px; color: #d8d8d8; }
.p-pin { margin-left: auto; margin-right: 10px; }
.pr-main { flex: 1; display: flex; min-height: 0; }
.pr-tabs { width: 28px; flex: none; background: #262626; padding: 8px 0 0 3px; display: flex; flex-direction: column; gap: 10px; }
.pr-tabs .ptgroup { display: flex; flex-direction: column; gap: 0; }
.ptgroup:nth-child(3) { margin-top: 6px; }
.ptab { height: 28px; display: flex; align-items: center; justify-content: center; background: #2c2c2c; border-radius: 4px 0 0 4px; padding-right: 1px; }
.ptab.current { background: #3f3f3f; }
.pt-tool { height: 25px; }
.pt-tex { height: 27px; }
.pr-panels { flex: 1; min-width: 0; background: #424242; }
.panel-head { height: 24px; display: flex; align-items: center; padding-left: 7px; color: #c8c8c8; position: relative; font-size: 12.300px; }
.panel-head.open { background: #484848; }
.ptri { margin-right: 8px; color: #aaa; }
.grip { margin-left: auto; margin-right: 4px; color: #777; }
.panel-body { height: 86px; background: #3d3d3d; padding-top: 9px; }
.prop { height: 25px; display: flex; align-items: flex-start; color: #c8c8c8; }
.prop label { width: 143px; text-align: right; padding-top: 4px; }
.field { margin-left: 10px; width: 142px; height: 19px; background: #1c1c1c; border-radius: 4px; display: flex; align-items: center; padding-left: 4px; }
.drop { margin-left: auto; margin-right: 3px; }
.gcheck { width: 12px; height: 12px; background: #5680c2; border-radius: 2px; margin: 0 6px 0 2px; display: flex; align-items: center; justify-content: center; }

/* status */
.statusbar { height: 22px; flex: none; background: #2d2d2d; display: flex; align-items: center; color: #a8a8a8; position: relative; }
.st-m1 { margin-left: 11px; }
.st-l1 { margin-left: 11px; }
.st-m2 { margin-left: 182.500px; }
.st-l2 { margin-left: 8.500px; }
.st-m3 { margin-left: 107px; }
.st-stats { margin-left: auto; margin-right: 30.500px; color: #b0b0b0; letter-spacing: .2px; }
```
FILE: grid.js
```js
(function () {
  var NS = "http://www.w3.org/2000/svg";
  var g = document.getElementById("grid");
  var O = [794, 715], VX = [245, 20], VY = [3300, 36];
  var su = -0.036, sv = -0.0171;

  function project(u, v) {
    var w = 1 + u * su + v * sv;
    return [
      (O[0] + u * su * VX[0] + v * sv * VY[0]) / w,
      (O[1] + u * su * VX[1] + v * sv * VY[1]) / w
    ];
  }

  function addLine(a, b, colour, width) {
    var l = document.createElementNS(NS, "line");
    l.setAttribute("x1", a[0].toFixed(1));
    l.setAttribute("y1", a[1].toFixed(1));
    l.setAttribute("x2", b[0].toFixed(1));
    l.setAttribute("y2", b[1].toFixed(1));
    l.setAttribute("stroke", colour);
    l.setAttribute("stroke-width", width);
    g.appendChild(l);
  }

  function style(i) {
    if (i === 0) return null;
    return i % 10 === 0 ? ["rgba(255,255,255,.13)", 1.1] : ["rgba(255,255,255,.07)", 1];
  }

  var u, v, s;
  for (u = -90; u <= 27; u++) {
    s = style(u);
    if (!s) continue;
    if (u < -30 && u % 10 !== 0) continue;
    addLine(project(u, -4000), project(u, (1 + u * su - 0.03) / -sv), s[0], s[1]);
  }
  for (v = -120; v <= 57; v++) {
    s = style(v);
    if (!s) continue;
    if (v < -60 && v % 10 !== 0) continue;
    addLine(project(-4000, v), project((1 + v * sv - 0.03) / -su, v), s[0], s[1]);
  }
  addLine(project(-4000, 0), project(27, 0), "#a23a48", 1.4);
  addLine(project(0, -4000), project(0, 57), "#6f9a18", 1.4);
})();
```
